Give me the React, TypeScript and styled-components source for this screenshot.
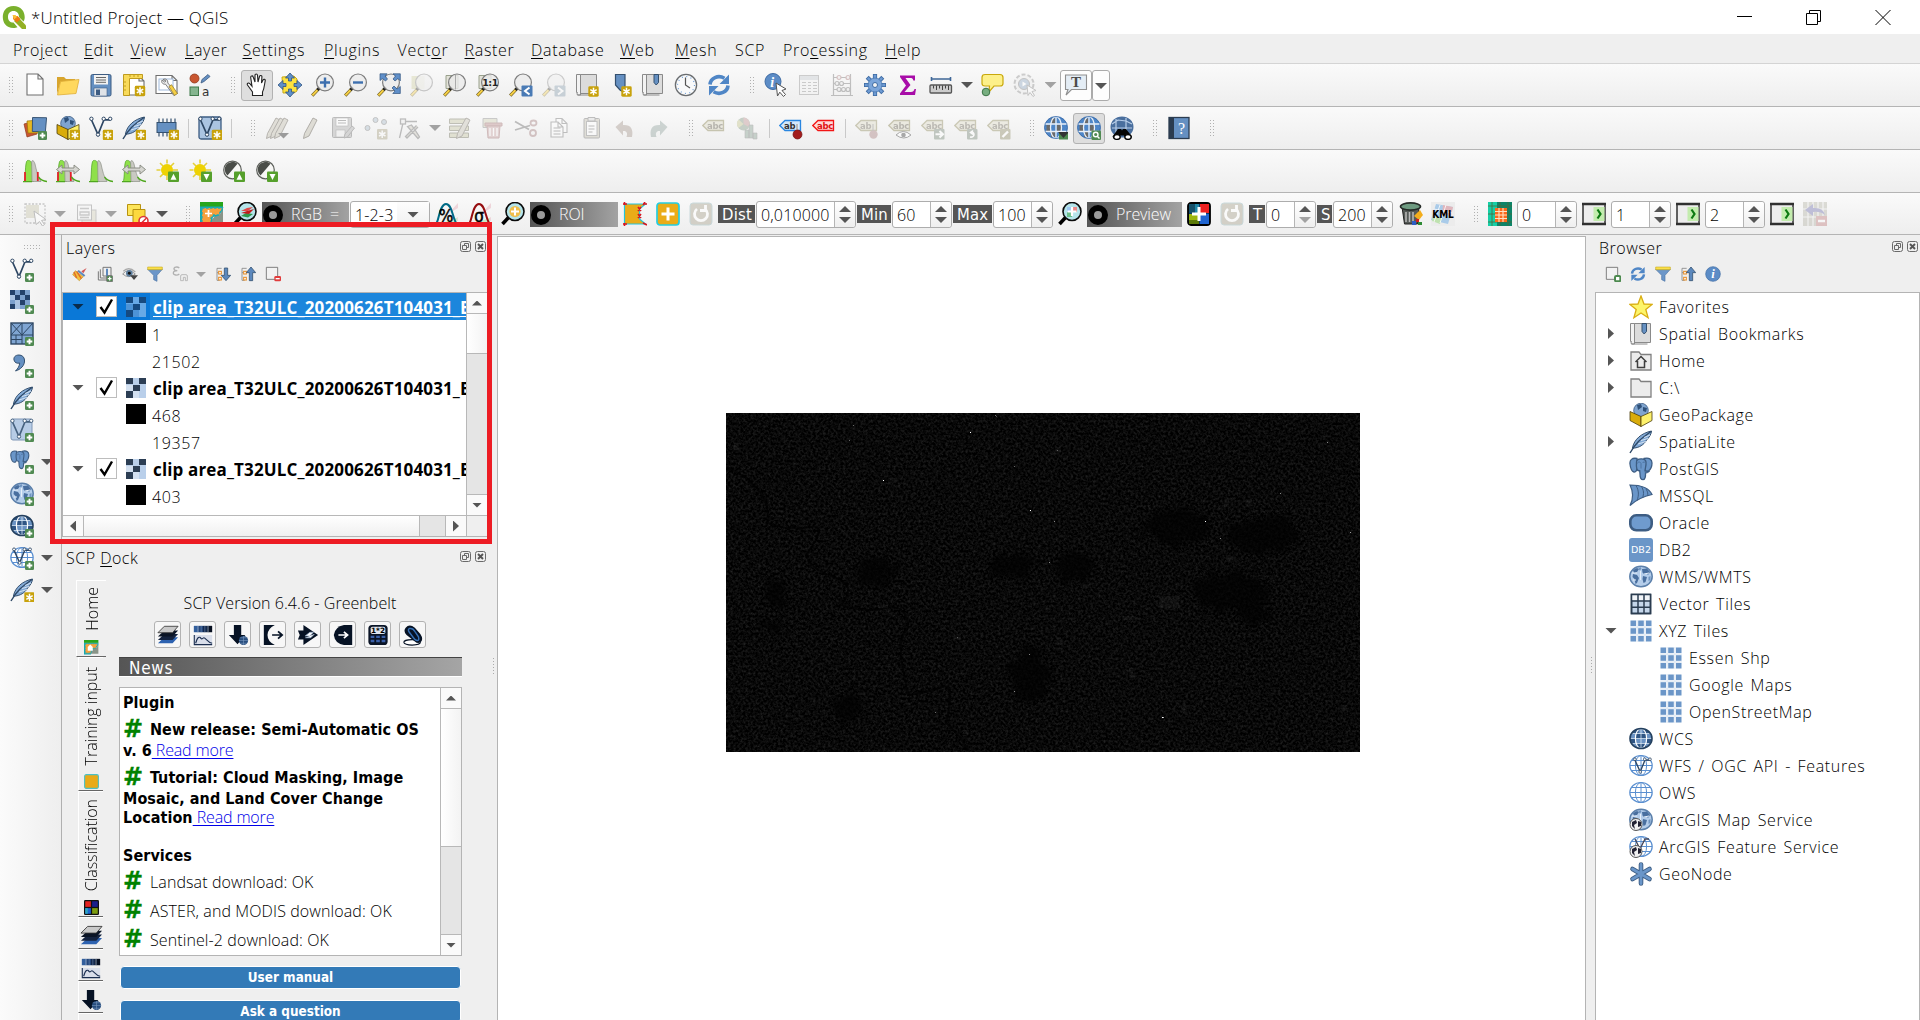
import React from 'react';
import styled, { createGlobalStyle, css } from 'styled-components';

const UI = `"Open Sans", "Noto Sans", sans-serif`;
const DIALOG = `"DejaVu Sans Condensed", "DejaVu Sans", sans-serif`;

const Global = createGlobalStyle`
  *, *::before { box-sizing: border-box; }
  body { margin: 0; overflow: hidden; background: #efefef; font: 300 16px ${UI}; letter-spacing: .5px; color: #000; }
  svg { display: block; flex: none; font-weight: 400; letter-spacing: 0; }
`;

/* ---------- icon parts ---------- */

const Star = ({ x = 13, y = 13 }: { x?: number; y?: number }) => (
  <g transform={`translate(${x} ${y})`}>
    <rect x="0.3" y="0.3" width="10.4" height="10.4" rx="1.4" fill="#c8a20c" />
    <path d="M5.5 1.8v7.4M2.3 3.7l6.4 3.6M8.7 3.7L2.3 7.3" stroke="#fff" strokeWidth="1.5" />
  </g>
);
const Plus = ({ x = 15, y = 15 }: { x?: number; y?: number }) => (
  <g transform={`translate(${x} ${y})`}>
    <rect x="0" y="0" width="9" height="9" rx="1.3" fill="#508a52" />
    <path d="M4.5 1.7v5.6M1.7 4.5h5.6" stroke="#fff" strokeWidth="1.9" />
  </g>
);
const Lens = ({ children }: { children?: React.ReactNode }) => (
  <g>
    <path d="M8 15.5L1.2 22.6" stroke="#6b5a20" strokeWidth="3.2" />
    <path d="M7 16.5L1.4 22.4" stroke="#f5cf45" strokeWidth="2" />
    <path d="M8.8 14.4L6.4 17" stroke="#222" strokeWidth="2.8" />
    <circle cx="14" cy="9.4" r="8.4" fill="#ebebeb" fillOpacity=".8" stroke="#7d7d7d" strokeWidth="1.2" />
    {children}
  </g>
);
const Globe = ({ fill = '#fff', line = '#5a8fd0' }: { fill?: string; line?: string }) => (
  <g fill="none" stroke={line} strokeWidth="1">
    <ellipse cx="12" cy="11.5" rx="11.2" ry="10" fill={fill} strokeWidth="1.2" />
    <ellipse cx="12" cy="11.5" rx="5.6" ry="10" />
    <path d="M12 1.5v20M1 11.5h22M2.6 6.5h18.8M2.6 16.5h18.8" />
  </g>
);
const DarkGlobe = () => (
  <g>
    <ellipse cx="12" cy="11.500" rx="11" ry="10" fill="#6b93c4" />
    <path d="M2.500 6.500l4-4h3v4zM14.500 2.500h3l4 4h-7zM1 11.500h5v5H3zM18 11.500h5l-2 5h-3zM7 7h10v4.500H7zM7 16.500h10V20H8z" fill="#2f5584" />
    <path d="M12 1.500v20M1 11.500h22M2.600 6.500h18.800M2.600 16.500h18.800" stroke="#d7e4f3" strokeWidth=".8" />
    <ellipse cx="12" cy="11.500" rx="5.600" ry="10" fill="none" stroke="#fff" strokeWidth="1.200" />
    <ellipse cx="12" cy="11.500" rx="11" ry="10" fill="none" stroke="#24405f" strokeWidth="1.600" />
  </g>
);
const Earth = () => (
  <g>
    <ellipse cx="12" cy="11.5" rx="11.2" ry="10.2" fill="#b4cdea" stroke="#5c80ab" strokeWidth="1.500" />
    <path d="M4 5l4-2 2 1-2 3-3 1zM4 9l4 1 2 3-2 5-1.500 1-1-5-2-2zM13 4l5-.5 3 3.500-2 3-1.500-2-2 1.500-2-2zM14 11l4 1-1.500 5-2 1-1-4z" fill="#496f9f" />
    <path d="M9.500 3.500l2-1.500 1 2-2 1.500zM19.500 12l2-1v4l-2 1z" fill="#6f94c0" />
    <path d="M4 15h3M15 9l5-1M11.500 6v9M3 8h5" stroke="#e6eff9" strokeWidth="1" />
  </g>
);
const Nodes = ({ color = '#2d4663' }: { color?: string }) => (
  <g fill="none" stroke={color}>
    <path d="M2.5 4L9 18.5L15 3.8h6" strokeWidth="1.7" />
    <g fill="#fff" strokeWidth="1"><circle cx="2.4" cy="2.8" r="1.7" /><circle cx="14.7" cy="2.8" r="1.7" /><circle cx="21.2" cy="2.8" r="1.7" /><circle cx="9" cy="18.6" r="1.7" /></g>
  </g>
);
const Feather = () => (
  <g>
    <path d="M22.5 1C13 3 5 9 3.4 18.2c7-.2 11.6-3.6 14.2-8.2 2.800-3 4.600-5.600 4.900-9z" fill="#83aad6" stroke="#34506f" strokeWidth="1" />
    <path d="M22 1.5C14 7.500 7.500 11 1 23" fill="none" stroke="#2e4866" strokeWidth="1.4" />
    <path d="M9 14l8-2.500M12 10.500l7-2M15 7.500l6-2.500" stroke="#dbe8f5" strokeWidth=".9" />
  </g>
);
const Elephant = () => (
  <g fill="#6a96c9" stroke="#3d5d83" strokeWidth="1.300">
    <path d="M8 1.500C3 .5.5 3 1 7c.4 4 2 7.500 4 8 2 .3 3-2 3-4z" />
    <path d="M15 1.500c5-1.300 8 .7 8 4.500 0 3-1.500 6.500-3.500 8-2 1.200-4-.5-4-3z" />
    <path d="M7.500 5c0-4 9-4.500 9.500 0 .4 4-1 6-1 9l4 .5c-1 1.500-2.500 1.500-3.500 1.500.2 3-.3 6.700-2.500 6.700s-3-2.200-3-6l-.3-3c-3 .6-3.600-3-3.200-8.700z" />
    <path d="M8.500 6.500c0-2 3-2 3.500 0v5M16.500 6c-1-1.500-2.500-1-3 0" fill="none" stroke="#4a6f9e" strokeWidth=".9" />
  </g>
);
const Grid = () => (
  <g fill="#6b96c8">
    {[1.5, 9.2, 16.9].map((x) => [1.5, 9.2, 16.9].map((y) => <rect key={`${x}-${y}`} x={x} y={y} width="5.600" height="5.600" />))}
    <path d="M8.200 1v22M15.900 1v22M1 8.200h22M1 15.900h22" stroke="#dbe6f2" strokeWidth="1" />
  </g>
);
const GeoBox = () => (
  <g stroke="#4b3e0a" strokeWidth=".8">
    <circle cx="12" cy="7.500" r="7.300" fill="#7fa4cf" stroke="#3d5d83" />
    <path d="M8 2l4-1 1 3-4 3zM14 4l4 1-1 4-3-1z" fill="#2f5179" stroke="none" />
    <path d="M1 8.500l11 5v10l-11-6z" fill="#d9ac0b" />
    <path d="M23 8.500l-11 5v10l11-6z" fill="#fdf16b" />
  </g>
);
const Refresh = () => (
  <g fill="none" stroke="#4f86c6" strokeWidth="3.600">
    <path d="M3 11.500C3.500 5 11 1.500 17.500 5.200" />
    <path d="M21 12.500C20.500 19 13 22.500 6.500 18.800" />
    <path d="M22 1.500v9.500h-9.500zM2 22.500V13h9.500z" fill="#4f86c6" stroke="none" />
  </g>
);
const Tag = ({ c = '#a9a583', bg = '#e4e2d2', t = '#8f8b80', word = 'abc' }: { c?: string; bg?: string; t?: string; word?: string }) => (
  <g>
    <path d="M.8 9.500L6 4.500h15.500v10H6z" fill={bg} stroke={c} strokeWidth="1.300" />
    <text x="5" y="12.600" fontSize="8.500" fontWeight="700" fill={t} letterSpacing="-.3" fontFamily="DejaVu Sans, sans-serif">{word}</text>
  </g>
);
const Hist = ({ red, arrow }: { red?: boolean; arrow?: boolean }) => (
  <g>
    <path d="M1 22.500C3 22 1.500 2 4.500 1.500S8.500 3 9.500 7l1 15.500z" fill="#8fe04a" stroke="#4ca022" strokeWidth=".7" />
    <path d="M9 22.500L8.600 3c.4-2.500 2.500-1.500 3.400 2 1.500 6.500 3 13.500 6 17.500z" fill="#c9c9c2" stroke="#8d9187" strokeWidth=".7" />
    {red && <path d="M2 13v9M14.800 13v9" stroke="#e3222a" strokeWidth="1.800" />}
    <path d="M0 22.600h9M15.500 18q3 4 8.500 4.500" fill="none" stroke="#4fa71e" strokeWidth="1.300" />
    {arrow && <path d="M.5 10.500L6 6v3h12V6l5.500 4.500L18 15v-3H6v3z" fill="#d5d5d0" stroke="#83877d" strokeWidth=".9" />}
  </g>
);
const UpDown = ({ down }: { down?: boolean }) => (
  <g>
    <rect x="13" y="12.500" width="11" height="10.500" rx="1" fill="#56a02c" />
    <path d={down ? 'M15.500 15h6l-3 6z' : 'M15.500 20.800h6l-3-6z'} fill="#fff" />
  </g>
);
const Sun = () => (
  <g>
    <path d="M12 .5v4M12 17v4M1.500 11h4M18 11h5M5 4l3 3M16 7l3-3M5 18l3-3" stroke="#e3cf3a" strokeWidth="1.600" />
    <circle cx="12" cy="11" r="6" fill="#eed202" />
  </g>
);
const Contrast = () => (
  <g>
    <circle cx="11.500" cy="11" r="8.800" fill="#f7f7f5" stroke="#5c5f5a" strokeWidth="1.200" />
    <path d="M16.500 4.700A7.500 7.500 0 0 0 6.500 16.500z" fill="#4a4d48" />
  </g>
);
const Page = ({ x = 4, y = 1, w = 16, h = 21 }: { x?: number; y?: number; w?: number; h?: number }) => (
  <path d={`M${x} ${y}h${w - 5}l5 5v${h - 5}h-${w}z M${x + w - 5} ${y}v5h5`} fill="#fff" stroke="#6f6f6f" strokeWidth="1.100" />
);
const Scroll = () => (
  <g stroke="#8a8a8a" strokeWidth="1">
    <path d="M4.500 1.500h17v19h-17z" fill="#dcdcdc" />
    <path d="M1.500 1.500h4v20.500h-3q-1-1 0-2.500h-1z" fill="#f3f3f3" />
    <path d="M2.500 22h16" fill="none" />
  </g>
);
const Globe3D = () => (
  <g>
    <ellipse cx="12" cy="11.500" rx="11.500" ry="11" fill="#4e86c8" />
    <path d="M2.500 9h4v6h-4zM13 9h4v6h-4zM7 2.500h4v5H7zM7 16h4v5H7z" fill="#6a6a6a" />
    <path d="M1 8h22M1 15.500h22M12 .5v22" stroke="#e9f0f8" strokeWidth="1.300" />
    <ellipse cx="12" cy="11.500" rx="5.500" ry="11" fill="none" stroke="#e9f0f8" strokeWidth="1.300" />
    <ellipse cx="12" cy="11.500" rx="11.500" ry="11" fill="none" stroke="#2f62a3" strokeWidth=".8" />
  </g>
);
const Pencil = ({ dx = 0 }: { dx?: number }) => (
  <path transform={`translate(${dx} 0)`} d="M2.500 22.500l1-5L12 2l4 2L8 20z" fill="#cfccc0" stroke="#77736a" strokeWidth=".9" />
);
const BlackLens = ({ children }: { children?: React.ReactNode }) => (
  <g>
    <path d="M8 15L1.500 22" stroke="#000" strokeWidth="3.600" />
    <circle cx="14" cy="9.500" r="9" fill="#b5e4ea" stroke="#0b0b0b" strokeWidth="1.600" />
    {children}
  </g>
);
const Undo = ({ c }: { c: string }) => (
  <path d="M2.500 11l7.500-6.500v4.500c8-.5 10.500 4 9 12h-5.500c1.500-4 0-6.500-3.500-6v4.500z" fill={c} />
);
const RedoBox = () => (
  <g opacity=".55">
    <rect x="1" y="1" width="22" height="22" rx="3" fill="#b9b4a4" stroke="#a7c3c6" />
    <path d="M8 7a6.500 6.500 0 1 0 8 0M16.500 3v5.500H11" fill="none" stroke="#fff" strokeWidth="2.800" />
  </g>
);
const Layered = () => (
  <g>
    <path d="M1 21l7-6.500h15L17 21z" fill="#2d62b0" /><path d="M1 17.500L8 11h15l-6 6.500z" fill="#14233f" />
    <path d="M1 13.500L8 7h15l-6 6.500z" fill="#0b1526" /><path d="M1 9.500L8 2.500h15L17 9.500z" fill="#c9c9c9" stroke="#333" strokeWidth=".9" />
  </g>
);
const BandPlot = () => (
  <g>
    <path d="M2 2h5v7H2z" fill="#335f9c" /><path d="M7 2h5v7H7z" fill="#23467c" /><path d="M12 2h5v7h-5z" fill="#12284d" /><path d="M17 2h5v7h-5z" fill="#060f20" />
    <path d="M6 2v7M10 2v7M14 2v7M18 2v7" stroke="#8fa6c8" strokeWidth=".5" />
    <rect x="2" y="12" width="20" height="11" fill="#d9deea" />
    <path d="M2.500 12v10.500H22M4 21c2-7 4-8 6-5 1 1 2-1 3-1 2 0 4 5 9 6" fill="none" stroke="#1b2e50" strokeWidth="1.200" />
  </g>
);
const DownGlobe = () => (
  <g>
    <path d="M7.500 1h8v11H20l-8.500 10L2 12h5.500z" fill="#061224" />
    <circle cx="18" cy="18" r="5" fill="#274d7e" /><path d="M13 18h10M18 13v10M14.500 15h7M14.500 21h7" stroke="#7f9cc2" strokeWidth=".6" />
  </g>
);
const Clip = () => (
  <g>
    <path d="M10 20l5-6 5-2 3-5v15H10z" fill="#8a9488" />
    <path d="M0 4h23v4l-5 6-5 1-2 8H0z" fill="#14aab4" />
    <rect width="23" height="4.500" fill="#27a51b" />
    <path d="M2 6h20.500l-4 7h-5l-2.500 3v5H2z" fill="#f6a03c" stroke="#25aab2" strokeWidth="1.300" strokeDasharray="2.500 1.500" />
  </g>
);
const Stat = ({ c, s }: { c: string; s: string }) => (
  <g>
    <path d="M13 12L23 1v5zM14 20l9-5v4z" fill="#eed5da" /><path d="M3 22h19v-6z" fill="#c7efc8" />
    <path d="M1 22C4 19 4.500 2 11 2S18 19 22 22" fill="none" stroke={c} strokeWidth="2" />
    <text x="11" y="19.500" fontSize="17" textAnchor="middle" fontFamily="DejaVu Sans Condensed, sans-serif" stroke="#000" strokeWidth=".5">{s}</text>
  </g>
);
const Window = () => (
  <g>
    <rect x="1" y="2" width="22" height="20" fill="#ededed" stroke="#303030" strokeWidth="1.500" />
    <path d="M0 2h24M0 22h24" stroke="#303030" strokeWidth="2.600" />
    <rect x="11.500" y="5" width="11" height="14" fill="#c3ecae" /><path d="M15.500 7.500l3 4.500-3 4.500" fill="none" stroke="#0d7a12" strokeWidth="2.200" />
  </g>
);
const Checker = ({ pale, mid, dark }: { pale: string; mid: string; dark: string }) => (
  <g>
    <rect width="20" height="20" fill={pale} />
    <path d="M0 0h7v6H0zM13 0h7v6h-7zM7 7h7v6H7zM0 13h7v7H0z" fill={dark} />
    <path d="M0 7h7v6H0zM7 13h6v7H7z" fill={mid} />
  </g>
);
const Tray = ({ down }: { down?: boolean }) => (
  <g>
    <path d="M3 3.500h7M3 3.500v18h4M3 10h4" stroke="#8a8a8a" strokeWidth="1.300" fill="none" />
    <g fill="#fff" stroke="#e8902a" strokeWidth="1.600"><rect x="5.500" y="8" width="4" height="4" /><rect x="5.500" y="17" width="4" height="4" /></g>
    <path d={down ? 'M14 3h5v11h4.500L16.500 22 9.500 14H14z' : 'M14 22h5V10h4.500L16.500 1.500 9.500 10H14z'} fill="#5c88bd" stroke="#34506f" strokeWidth="1.200" />
  </g>
);
const Twin = ({ side }: { side: 'in' | 'mid' | 'out' }) =>
  side === 'in' ? (
    <g><path d="M2 1h12Q6 5 6 12t8 11H2z" fill="#061224" /><path d="M11 12h11M17.500 8l4.500 4-4.500 4" fill="none" stroke="#061224" strokeWidth="1.900" /></g>
  ) : side === 'mid' ? (
    <g><path d="M1 7h6V1l16 11L7 23v-6H1l2-5z" fill="#061224" /><path d="M9 13l5-4h4l-4 4zM9 15l6 0 4-4" fill="#fff" stroke="#9bb3d0" strokeWidth=".8" /></g>
  ) : (
    <g><path d="M22 1v22h-9Q3 21 2 12 3 3 13 1z" fill="#061224" /><path d="M7 12h10M13 8.500l4 3.500-4 3.500" fill="none" stroke="#fff" strokeWidth="1.900" /></g>
  );

const ICONS: Record<string, React.ReactNode> = {
  logo: (
    <g>
      <path d="M11.500 1C4 1 .8 6.500.8 12S4 23 11.500 23c1.500 0 3-.3 4-.8l-4-4.700c-3.600 0-5.500-2-5.500-5.500s2-6 5.500-6 5.500 2.500 5.500 6l4.500 4.500c1-1.500 1.200-3 1.200-4.500C22.700 6.500 19 1 11.500 1z" fill="#7ab02c" />
      <path d="M12.500 12.500h4l7.500 8v3.500h-4l-7.500-7.500z" fill="#93b023" /><path d="M11 11h4.500l3 3-3.500 3.500L11 14z" fill="#ee7913" /><path d="M10.500 10h3l1.500 2-3 2.500z" fill="#f8c13c" />
    </g>
  ),
  fresh: <Page />,
  open: <g><path d="M1 4h7l2 2h9v5H4L1 21z" fill="#d8a52e" /><path d="M4.500 8.500L23 6.500 20 20.500 1.500 22z" fill="#ffd85e" stroke="#dfaf37" strokeWidth=".8" /></g>,
  save: <g><rect x="2" y="1.500" width="20" height="21.500" rx="1.500" fill="#6590c2" stroke="#3d5c82" /><rect x="5" y="2" width="14" height="9.500" fill="#f2f2f2" /><path d="M7 4.500h10M7 7h10M7 9.300h10" stroke="#666" /><rect x="5" y="15" width="13" height="8" fill="#dfe3e8" stroke="#3d5c82" strokeWidth=".6" /><rect x="7" y="16.500" width="4" height="5.500" fill="#3d5c82" /></g>,
  layout: <g><Page x={5} y={3} w={17} h={19} /><path d="M1.500 1.500h19v4h-13v17h-6z" fill="#f8da5a" stroke="#b8920f" strokeWidth=".9" /><path d="M8 2v2M12 2v2M16 2v2M2 9h2M2 13h2M2 17h2" stroke="#b8920f" strokeWidth=".8" /><Star x={12.500} y={12.500} /></g>,
  manager: <g><Page x={1} y={2.500} w={21} h={18} /><rect x="4" y="6" width="14" height="11" fill="#fff" stroke="#9fb9dc" /><path d="M8 6.500c3-1.500 5 .5 4.800 3.500l9 10.500-3 2-8.300-11.300c-3 .3-4.500-2-3.500-4.200l2.500 2 1.500-1z" fill="#ececec" stroke="#707070" strokeWidth=".9" /><path d="M14 13.500l2.500-1.800 6 8.800-3 2z" fill="#f5cf45" stroke="#8d7320" strokeWidth=".7" /></g>,
  style: <g><circle cx="6.500" cy="5.500" r="4.500" fill="#c95630" stroke="#8f3a1d" strokeWidth=".8" /><path d="M13 10l1-3.500 6-5 2 2-6 5z" fill="#6590c2" stroke="#3d5c82" strokeWidth=".8" /><rect x="2" y="14" width="8.500" height="8.500" fill="#85b58f" stroke="#3f7a4b" /><text x="14" y="22.500" fontSize="12" fill="#333" fontFamily="DejaVu Sans">a</text></g>,
  pan: <path d="M7.500 22.500v-3.500L2.500 12c-.8-1.500 1-2.700 2.300-1.300l2.200 2.500L5.700 4.500c-.2-1.800 2-2.200 2.500-.5L10 9V2.300c0-1.700 2.400-1.700 2.500 0L13 9l1.500-5.500c.5-1.600 2.600-1.200 2.400.4L16.500 10l1.500-3c.8-1.300 2.500-.6 2.200.8-.8 3.500-.8 8-2.700 11.200v3.500z" fill="#fff" stroke="#222" strokeWidth="1.100" />,
  panSel: <g><path d="M4 4l12-1 3 3v12l-3 2H5z" fill="#fde23e" stroke="#c2a20e" strokeWidth=".9" /><g fill="#5f8fc9" stroke="#30537e" strokeWidth=".8"><path d="M12 0l4.500 5h-3v3h-3V5h-3zM12 24l4.500-5h-3v-3h-3v3h-3zM0 12l5-4.500v3h3v3H5v3zM24 12l-5-4.500v3h-3v3h3v3z" /></g></g>,
  zoomIn: <Lens><path d="M14 4.500v10M9 9.500h10" stroke="#3d6fae" strokeWidth="2.400" /></Lens>,
  zoomOut: <Lens><path d="M9 9.500h10" stroke="#3d6fae" strokeWidth="2.400" /></Lens>,
  zoomFull: <g><Lens /><g fill="#5f8fc9" stroke="#30537e" strokeWidth=".7"><path d="M3 .8h7L8 3l2.500 3L8.500 8 5.500 5.500 3 7.500zM23.300.8v7L21 5.500 18 8l-2-2 2.500-3-2.500-2.200zM23.300 20.500h-7.500L18 18l-3-3 2-2 3 3 3.300-2.500z" /></g></g>,
  zoomSel: <g opacity=".38"><path d="M1.500 3h13v13h-13z" fill="#cfcf9f" /><Lens /></g>,
  zoomLayer: <g><path d="M3 2.500h12v13H3z" fill="#e2e2d8" stroke="#99a08c" /><Lens><path d="M12.500 2v14.500" stroke="#aaa" /></Lens></g>,
  zoomNative: <g><path d="M3 2.500h12v13H3z" fill="#e2e2d8" stroke="#99a08c" /><Lens><text x="14" y="13" fontSize="9.500" fontWeight="700" textAnchor="middle" fill="#222" letterSpacing="-.5" fontFamily="DejaVu Sans">1:1</text></Lens></g>,
  zoomLast: <g><Lens /><rect x="12.500" y="12.500" width="11" height="11" rx="1" fill="#4a7bb5" /><path d="M20.500 14.500L16 18l4.500 3.500" stroke="#fff" strokeWidth="2" fill="none" /></g>,
  zoomNext: <g opacity=".35"><Lens /><rect x="12.500" y="12.500" width="11" height="11" rx="1" fill="#7a93a5" /><path d="M16 14.500l4.500 3.500-4.500 3.500" stroke="#fff" strokeWidth="2" fill="none" /></g>,
  newView: <g><Scroll /><Star /></g>,
  newMark: <g><path d="M7.500 1.500H17V20l-5-3-4.500-5z" fill="#6590c2" stroke="#34506f" strokeWidth="1.200" /><Star x={13} y={13} /></g>,
  marks: <g><Scroll /><path d="M13 1.500h4.500v8L15.200 12 13 9.500z" fill="#6590c2" stroke="#34506f" /></g>,
  clock: <g><circle cx="12" cy="12" r="10.600" fill="#f8f9fa" stroke="#6a6d70" strokeWidth="1.300" /><circle cx="12" cy="12" r="8.500" fill="none" stroke="#6f9fd6" strokeWidth="1.200" strokeDasharray="1 3.450" /><path d="M11.500 4.500V12l4.500 3" fill="none" stroke="#555" strokeWidth="1.200" /></g>,
  refresh: <Refresh />,
  identify: <g><circle cx="9" cy="8.500" r="8" fill="#5c8cc6" stroke="#3e6ba3" /><text x="6.300" y="13.500" fontSize="14" fontStyle="italic" fontWeight="700" fill="#fff" fontFamily="Liberation Serif">i</text><path d="M12 10l10 6-4 1.500 3.500 4-2 2-3.700-4.300L13.500 23z" fill="#fff" stroke="#555" strokeWidth="1" /></g>,
  table: <g opacity=".45"><rect x="2.500" y="2.500" width="19" height="19" fill="#f3f3f3" stroke="#999" /><rect x="3" y="3" width="18" height="4" fill="#ccd0d4" /><path d="M5 9.500h4M11 9.500h3M16 9.500h4M5 12.500h4M11 12.500h3M16 12.500h4M5 15.500h4M11 15.500h3M16 15.500h4M5 18.500h4M11 18.500h3M16 18.500h4" stroke="#999" strokeWidth="1.200" /></g>,
  abacus: <g opacity=".5" fill="none" stroke="#8a8a8a" strokeWidth="1.200"><path d="M3.500 1v21M20.500 1v21M1 22.500h22M3 4.500h18M3 10.500h18M3 16.500h18" /><g fill="#eee"><circle cx="9" cy="4.500" r="2" stroke="#b68f8f" /><circle cx="18" cy="4.500" r="2" stroke="#b68f8f" /><circle cx="7" cy="10.500" r="2" /><circle cx="11.500" cy="10.500" r="2" /><circle cx="9" cy="16.500" r="2" /><circle cx="13.500" cy="16.500" r="2" /><circle cx="18" cy="16.500" r="2" /></g></g>,
  gear: <g><path d="M12 1v22M1 12h22M4.200 4.200l15.600 15.600M19.800 4.200L4.200 19.800" stroke="#3e6ba3" strokeWidth="4.200" /><path d="M12 1.800v20.400M1.800 12h20.400M4.800 4.800l14.400 14.400M19.200 4.800L4.800 19.200" stroke="#6d9ad2" strokeWidth="2.600" /><circle cx="12" cy="12" r="7" fill="#7ba5da" stroke="#4a78b0" strokeWidth=".8" /><circle cx="12" cy="12" r="2.500" fill="#f4f4f4" stroke="#3e6ba3" /></g>,
  sigma: <path d="M4 2.500h15v5h-1.700c-.3-2-1.200-2.500-3.300-2.500H9.500L14.500 12l-6 7h6.500c2 0 3-1.200 3.500-3h1.500L19 22H4v-1.500l6-8L4 4z" fill="#a80da8" />,
  measure: <g><path d="M2.500 6h19M2.500 4v4M21.500 4v4" stroke="#3f6797" strokeWidth="1.600" /><rect x="1" y="12" width="21.500" height="8" rx="1" fill="#ccc" stroke="#555" strokeWidth="1.300" /><path d="M4.500 12.500v3M7.500 12.500v4.500M10.500 12.500v3M13.500 12.500v4.500M16.500 12.500v3M19.500 12.500v4.500" stroke="#444" /></g>,
  tip: <g><path d="M5 1.500h15q3 0 3 3v6q0 2.500-3 2.500h-6l-5 6 .5-6H5q-3 0-3-2.500v-6q0-3 3-3z" fill="#fdf08a" stroke="#c9a80c" strokeWidth="1.200" /><circle cx="6" cy="19" r="3.800" fill="#77ae80" stroke="#3c7447" /></g>,
  action: <g opacity=".45"><circle cx="11" cy="11" r="9.500" fill="#eee" stroke="#999" strokeWidth="2" strokeDasharray="4 2" /><circle cx="11" cy="11" r="5.500" fill="#9ab0c8" stroke="#888" /><path d="M9.500 8.500l4 2.500-4 2.500z" fill="#fff" /><path d="M14 12l9 5.500-4 1 2.500 4-1.500 1-3-4-2 3z" fill="#fff" stroke="#888" /></g>,
  textNote: <g><path d="M1.500 2h21v14.500h-15L2 22l2-5.500H1.500z" fill="#e4edf5" stroke="#909090" strokeWidth="1.100" /><text x="12" y="14.200" fontSize="15" fontWeight="700" textAnchor="middle" fill="#4a4a4a" fontFamily="Liberation Serif">T</text></g>,
  addLayer: <g><path d="M1 8l10-3 3 13-10 3z" fill="#c95630" stroke="#8f3a1d" strokeWidth=".7" /><path d="M4 5l12-1v13H5z" fill="#e8b820" stroke="#97760d" strokeWidth=".7" /><path d="M9 2l14-1v14l-13 1z" transform="rotate(5 15 8)" fill="#6590c2" stroke="#34506f" strokeWidth=".9" /><Plus x={15} y={15} /></g>,
  newGpkg: <g><GeoBox /><Star x={13.500} y={13.500} /></g>,
  newShp: <g><Nodes /><Star x={13.500} y={13.500} /></g>,
  newSpl: <g><Feather /><Star x={13.500} y={13.500} /></g>,
  newMem: <g><path d="M4 2.500v18M8 2.500v18M12 2.500v18M16 2.500v18M20 2.500v18" stroke="#34506f" strokeWidth="1.200" /><rect x="2" y="6.500" width="19" height="10" fill="#6590c2" stroke="#34506f" /><Star x={13.500} y={13.500} /></g>,
  newVirt: <g><rect x="1" y="1" width="22" height="22" rx="2" fill="#aac4e2" stroke="#3d5c82" strokeWidth="1.300" /><Nodes /><Star x={13.500} y={13.500} /></g>,
  pencils: <g opacity=".55"><Pencil dx={-1} /><Pencil dx={3} /><Pencil dx={7} /><path d="M13 17h11l-5.500 5.500z" fill="#555" /></g>,
  pencil: <g opacity=".6"><Pencil dx={3} /></g>,
  saveEdit: <g opacity=".4" fill="#aaa" stroke="#666"><rect x="1.500" y="1.500" width="19" height="20" rx="1" /><rect x="5" y="2" width="12" height="8" fill="#fff" strokeWidth=".6" /><path d="M7 4.500h8M7 7h8" /><rect x="5" y="14" width="9" height="7" fill="#eee" strokeWidth=".6" /><path d="M13 22l1-4 7-8 2.500 2-7 9z" /></g>,
  addPoint: <g opacity=".4"><g fill="#a9bccb" stroke="#777"><circle cx="3.500" cy="12" r="2.500" /><circle cx="11.500" cy="4" r="2.500" /><circle cx="20" cy="6" r="2.500" /></g><rect x="13" y="13" width="10.500" height="10.500" rx="1" fill="#a79f80" /><path d="M18.200 14.500v7.500M15 16.500l6.500 3.500M21.500 16.500L15 20" stroke="#fff" strokeWidth="1.500" /></g>,
  vertex: <g opacity=".45" fill="none" stroke="#777" strokeWidth="1.300"><path d="M6 7L2.500 22M8 5.500h12" /><rect x="3.500" y="3" width="5" height="5" fill="#eee" /><path d="M19.500 9.500L8.500 20.500l1.500 1.500L21 11M10.500 10.500l4-1.500 3 4 5 8-1.500 1.500-7-8z" fill="#cfccc0" /></g>,
  modify: <g opacity=".5"><path d="M1.500 3h19v4.500h-19zM1.500 10h19v4.500h-19zM1.500 17h19v4.500h-19z" fill="#cfcfb2" stroke="#8a8a78" /><Pencil dx={6} /></g>,
  remove: <g opacity=".4"><path d="M2 2.500h14v9H2z" fill="#cfcfb2" stroke="#888" /><path d="M4 7h17v3H4z" fill="#b88" stroke="#966" /><path d="M6 10h13l-1 12H7z" fill="#c9a3a3" stroke="#966" /><path d="M9 12v8M12.500 12v8M16 12v8" stroke="#fff" strokeWidth="1.300" /></g>,
  cut: <g opacity=".45" fill="none" stroke="#777" strokeWidth="1.800"><path d="M1 5.500l14 8M1 14l15-4.500" /><ellipse cx="19.500" cy="7" rx="3" ry="2.500" stroke="#a88" /><ellipse cx="19" cy="17" rx="3" ry="3" stroke="#a88" /></g>,
  copy: <g opacity=".4"><Page x={9} y={2.500} w={11} h={14} /><Page x={4} y={6} w={12} h={15} /><path d="M6.500 12h7M6.500 15h7M6.500 18h7" stroke="#666" /></g>,
  paste: <g opacity=".45"><rect x="4" y="2.500" width="15.500" height="19.500" rx="1" fill="#c9c5b6" stroke="#777" /><rect x="6.500" y="5.500" width="10.500" height="14" fill="#fff" stroke="#888" /><path d="M8 1.500h7v3.500H8z" fill="#ddd" stroke="#777" /><path d="M8.500 10h6M8.500 13h6M8.500 16h4" stroke="#777" /></g>,
  undo: <g opacity=".4"><Undo c="#a3938a" /></g>,
  redo: <g opacity=".4" transform="translate(24 0) scale(-1 1)"><Undo c="#8f9f9a" /></g>,
  tagOff: <g opacity=".6"><Tag /></g>,
  diagram: <g opacity=".5"><circle cx="8.500" cy="8" r="6.500" fill="#9a9" /><path d="M8.500 8V1.500A6.500 6.500 0 0 1 14 11z" fill="#c9a3a3" /><path d="M8.500 8l-5 4a6.500 6.500 0 0 1 0-8.500z" fill="#cfcf9f" /><path d="M10 14h4v8h-4zM14 9h4v13h-4zM18 17h4v6h-4z" fill="#9bb0a3" stroke="#888" strokeWidth=".6" /></g>,
  tagPin: <g><Tag c="#2a86e0" bg="#d3e7fb" t="#333" word="ab" /><path d="M18 8v7" stroke="#fff" strokeWidth="2.500" /><path d="M18 8v7" stroke="#777" strokeWidth="1" /><circle cx="18.500" cy="18.500" r="4.500" fill="#a31d1d" stroke="#701010" strokeWidth=".7" /></g>,
  tagRed: <Tag c="#f21616" bg="#ffd9d9" t="#e01212" />,
  tagPinOff: <g opacity=".55"><Tag word="ab" /><circle cx="18.500" cy="18.500" r="4.200" fill="#bb9c9c" /><path d="M18 8v7" stroke="#999" /></g>,
  tagEye: <g opacity=".6"><Tag /><path d="M8 19q7-7 15 0-7 6-15 0z" fill="#fff" stroke="#777" /><circle cx="15.500" cy="19" r="2.300" fill="#777" /></g>,
  tagMove: <g opacity=".55"><Tag /><rect x="13" y="13" width="10.500" height="10.500" rx="1" fill="#98a398" /><path d="M14.500 18.200h7M18.500 15l3.500 3.200-3.500 3.300" stroke="#fff" strokeWidth="2" fill="none" /></g>,
  tagTurn: <g opacity=".55"><Tag /><rect x="13" y="13" width="10.500" height="10.500" rx="1" fill="#98a398" /><path d="M16 21c5 1 5-5 1.500-5M19 14.500L16.500 16.500l2.500 2" stroke="#fff" strokeWidth="1.600" fill="none" /></g>,
  tagEdit: <g opacity=".55"><Tag /><rect x="13" y="13" width="10.500" height="10.500" rx="1" fill="#aaa78c" /><path d="M15.500 21l5.500-5.500" stroke="#fff" strokeWidth="2.400" /></g>,
  webDown: <g><Globe3D /><rect x="15" y="16" width="9.500" height="7.500" fill="#4d8a4f" /><path d="M14 16h11l-5.500 6z" fill="#333" /></g>,
  webFind: <g><Globe3D /><rect x="14.500" y="14.500" width="9.500" height="9.500" rx="1" fill="#508a52" /><circle cx="18.700" cy="18.500" r="2.300" fill="none" stroke="#fff" strokeWidth="1.400" /><path d="M20.500 20.500l2 2" stroke="#fff" strokeWidth="1.500" /></g>,
  webBino: <g><ellipse cx="12" cy="11" rx="11.500" ry="10.500" fill="#4a6f9e" /><path d="M2 8l6-4 8 1 6 3M2 12h20M6 3v14M16 2v14" stroke="#b7cde8" strokeWidth="1.200" fill="none" /><path d="M8 13h3l1 1.500 1-1.500h3l6 7.500-1 2h-5l-2-3h-4l-2 3H3.500l-1-2z" fill="#050505" /><ellipse cx="7" cy="21" rx="3.200" ry="2.400" fill="#fff" stroke="#000" strokeWidth="1.300" /><ellipse cx="18" cy="21" rx="3.200" ry="2.400" fill="#fff" stroke="#000" strokeWidth="1.300" /></g>,
  book: <g><rect x="2" y="1.500" width="20" height="21" fill="#6590c2" stroke="#2b3c50" strokeWidth="1.300" /><rect x="2" y="1.500" width="5" height="21" fill="#2b3c50" /><text x="14.500" y="17.500" fontSize="16" fill="#fff" textAnchor="middle" fontFamily="Liberation Serif">?</text></g>,
  h1: <Hist red />, h2: <Hist red arrow />, h3: <Hist />, h4: <Hist arrow />,
  sunUp: <g><Sun /><UpDown /></g>, sunDown: <g><Sun /><UpDown down /></g>,
  conUp: <g><Contrast /><UpDown /></g>, conDown: <g><Contrast /><UpDown down /></g>,
  select: <g opacity=".5"><rect x="2" y="2" width="20" height="19" fill="none" stroke="#999" strokeDasharray="2 1.500" strokeWidth="1.300" /><path d="M3 3h13v13H3z" fill="#cfcdb8" /><path d="M11 9l12 8.500-4.500 1 3 4-2 1.500-3-4.500-3.500 3z" fill="#fff" stroke="#888" /></g>,
  form: <g opacity=".45"><rect x="8" y="8" width="14" height="14" fill="#d9d7c2" stroke="#999" /><rect x="3.500" y="3" width="14" height="15" fill="#f5f5f5" stroke="#888" /><path d="M6 6.500h9M6 10h9v3H6zM6 15.500h9" stroke="#999" strokeWidth="1.300" fill="none" /></g>,
  deselect: <g><path d="M2.500 2.500h13v11h-13z" fill="#fde55a" stroke="#b8920f" /><path d="M8 7.500h12v13H8z" fill="#fdd93e" stroke="#b8920f" /><circle cx="18.500" cy="19" r="4.500" fill="#fff" stroke="#d9363c" strokeWidth="1.600" /><path d="M15.500 22l6-6" stroke="#d9363c" strokeWidth="1.600" /></g>,
  roiClip: <g><Clip /><path d="M5 11.500h7M8.500 8v7" stroke="#fff" strokeWidth="1.700" /></g>,
  homeClip: <g><Clip /><path d="M6 17v-6l4-4 4 4v6z" fill="#fff" /></g>,
  lensLayers: <BlackLens><path d="M8 14l5-3 7 1-5 3.500z" fill="#2a9a4a" /><path d="M8 11l6-2 7-2-5 5z" fill="#c01c1c" /><path d="M8 9l6-3 6-1-5 4z" fill="#e04848" /></BlackLens>,
  percent: <Stat c="#006b86" s="%" />, sigmaStat: <Stat c="#960d10" s="σ" />,
  lensPlus: <BlackLens><circle cx="14" cy="9.500" r="5.600" fill="#f0be4c" /><path d="M14 5.500v8M10 9.500h8" stroke="#fff" strokeWidth="2" /></BlackLens>,
  lensColor: <BlackLens><path d="M9 5h5v5H9z" fill="#9cc6f2" /><path d="M14 5h5v5h-5z" fill="#e98a8a" /><path d="M9 10h5v5H9z" fill="#6cc08c" /><path d="M14 5v9M9.500 9.500h9" stroke="#fff" strokeWidth="2.200" /></BlackLens>,
  poly: <g><path d="M1.500 2h21l-6 5v10l6 5h-21z" fill="#eaac18" stroke="#22c4dc" strokeWidth="1.200" /><path d="M1.500 0v3M0 2h4M20 2h4M22 0l-2 3M1.500 21v3M0 22h4M20 21l4 2M15 5l3 4M18 5l-3 4M15 12l3 4M18 12l-3 4" stroke="#d91620" strokeWidth="1.600" /></g>,
  plusBox: <g><rect x="1" y="1" width="22" height="22" rx="3" fill="#eaac18" stroke="#25cde0" strokeWidth="1.700" /><path d="M12 5.500v13M5.500 12h13" stroke="#fff" strokeWidth="3" /></g>,
  redoBox: <RedoBox />,
  mosaic: <g><rect x="1" y="1" width="22" height="22" rx="3" fill="#103a6a" stroke="#000" strokeWidth="1.800" /><path d="M13 2h9v9h-9z" fill="#ee2020" /><path d="M2 2h6v9H2z" fill="#14506a" /><path d="M8 2h4v9H8z" fill="#2087a8" /><path d="M2 12h10v10H2z" fill="#9cb60e" /><path d="M2 18h10v4H2z" fill="#5c7a08" /><path d="M13 12h9v10h-9z" fill="#1f64d0" /><path d="M12 5v14M5 12h14" stroke="#fff" strokeWidth="3" /></g>,
  trash: <g><path d="M3 5h17l-1.500 17h-13z" fill="#555a57" stroke="#222" /><ellipse cx="11.500" cy="4.500" rx="10" ry="3.600" fill="#6d9a80" stroke="#262b28" strokeWidth="1.600" /><path d="M7 10v10M10.500 10v10M14 10v10" stroke="#bbb" strokeWidth="1.500" /><path d="M15 14l6-6 3 5-4 5z" fill="#f3ad1c" /><path d="M13 19h4v4h-4z" fill="#2c5cc4" /><path d="M17 17h3v3h-3z" fill="#d12121" /><path d="M19 20h4v3h-4z" fill="#2d8a34" /></g>,
  kml: <g><rect width="24" height="24" fill="#ececec" /><path d="M5 2l17 3-5 17L0 18z" fill="#a9cbe9" /><path d="M12 3l10 2-2 9-9-2z" fill="#eeb0b0" opacity=".8" /><path d="M2 14l9 2-2 6-8-3z" fill="#bfe2b0" /><path d="M9 3L3 20M15 3l-6 18M3 7l18 4" stroke="#fff" strokeWidth=".8" /><text x="12" y="16" fontSize="10" fontWeight="700" textAnchor="middle" fontFamily="DejaVu Sans Condensed" letterSpacing="-.1">KML</text></g>,
  matrix: <g><rect width="24" height="24" fill="#0d8468" /><path d="M0 0h9v24H0z" fill="#16cfa6" /><path d="M4 0v24M12 0v24M20 0v24M0 4h24M0 12h24M0 20h24" stroke="#4b6a3c" strokeWidth=".8" /><rect x="7" y="6" width="12" height="14" fill="#fb6a1c" /><path d="M11 6v14M15 6v14M7 9.500h12M7 13h12M7 16.500h12" stroke="#ffe2c4" strokeWidth="1.100" /></g>,
  window: <Window />,
  undoGrid: <g opacity=".35"><rect width="24" height="24" fill="#a9a898" /><path d="M5 0v24M10 0v24M15 0v24M20 0v24M0 7h24M0 15h24" stroke="#f1f1f1" strokeWidth="1.200" /><path d="M2 8l8-6v4q10-1 12 7-5-4-12-3v4z" fill="#5a5aa0" /><rect x="13" y="14" width="11" height="10" fill="#b96a6a" /><path d="M15 19h7" stroke="#fff" strokeWidth="2.500" /></g>,
  addVec: <g><Nodes /><Plus /></g>,
  addRas: <g><rect width="20" height="19" fill="#7ba0cd" /><path d="M0 0h5v5H0zM10 0h5v5h-5zM5 5h5v5H5zM15 5h5v5h-5zM0 14h5v5H0zM10 10h5v5h-5z" fill="#23426b" /><path d="M5 10h5v9H5zM0 5h5v5H0z" fill="#a9c3e2" /><Plus /></g>,
  addMesh: <g><rect x="1" y="1" width="22" height="21" fill="#7fa5d2" stroke="#2d4663" strokeWidth="1.400" /><path d="M1 13h22M12 1v21M1 1l11 12M12 1L1 13M23 1L12 13M6 13v9M1 17.500h11" stroke="#2d4663" fill="none" /><Plus /></g>,
  addCsv: <g><path d="M9 1c-4 0-5.500 2.500-5 5 .5 2.600 3 3.800 5.700 3C9.500 12 8 14.500 5.500 17c5-1.500 9.500-5.500 9-11-.2-3-2.500-5-5.500-5z" fill="#6590c2" stroke="#34506f" /><Plus /></g>,
  addSpl: <g><Feather /><Plus /></g>,
  addVirt: <g><rect x="1" y="1" width="21" height="21" rx="2" fill="#b7cce6" stroke="#7f96b5" /><Nodes color="#46617f" /><Plus /></g>,
  addPg: <g><g transform="scale(.82)"><Elephant /></g><Plus /></g>,
  addWms: <g><Earth /><Plus /></g>,
  addWcs: <g><DarkGlobe /><Plus /></g>,
  addWfs: <g><Globe /><g transform="translate(2 1) scale(.85)"><Nodes /></g><Plus /></g>,
  newFeather: <g><Feather /><Star x={14} y={14} /></g>,
  brush: <g><path d="M14 8l8-5-5 8z" fill="#d35656" /><path d="M5 7l12 9-6 6L1 13z" fill="#f3c13c" stroke="#b8871b" strokeWidth=".8" /><path d="M3 9l4 9M7 8l7 11" stroke="#df6c2a" strokeWidth="2.200" /><path d="M10 6l10 8-2 2L8 8z" fill="#5c88bd" /></g>,
  addGroup: <g fill="none" stroke="#777" strokeWidth="1.500"><path d="M2 8v13h14M5 5v13h14M9 2h12v13H9z" /><path d="M15 4v12" stroke="#5c88bd" strokeWidth="3" /><Plus x={14.500} y={14.500} /></g>,
  eye: <g><path d="M1 12Q9 2 20 12q-10 8-19 0z" fill="#eee" stroke="#888" strokeWidth="1.300" /><circle cx="11" cy="11" r="5" fill="#5e7f9f" /><circle cx="11" cy="11" r="2.200" fill="#111" /><path d="M2 8Q10 0 20 9" fill="none" stroke="#aaa" strokeWidth="2" /><path d="M12 14h12l-6 7z" fill="#444" /></g>,
  funnel: <g><path d="M1 5h22l-8 9v9l-5-2.500V14z" fill="#6b96c9" stroke="#4c76a8" /><path d="M1 1.500h22v4H1z" fill="#fbe04b" stroke="#c2a20e" strokeWidth=".8" /></g>,
  expr: <g opacity=".45" fill="none" stroke="#666" strokeWidth="2"><path d="M11 3C8 .5 2.500 1.500 3 4.500 3.300 6.500 5.500 7 8 7 4.500 7 2 8 2 10.500 2 14 8 14.500 11 12" /><path d="M13 22v-7q0-2 2-2h6q2 0 2 2v7h-3v-5h-3v5z" strokeWidth="1.300" /></g>,
  expand: <Tray down />, collapse: <Tray />,
  removeLayer: <g><path d="M2 2h17v18H2z" fill="#f2f2f2" stroke="#777" strokeWidth="1.400" /><rect x="14" y="15" width="10" height="8" rx="2" fill="#e03c3c" /><path d="M16 19h6" stroke="#fff" strokeWidth="2" /></g>,
  addSel: <g><path d="M2 2h17v18H2z" fill="#f2f2f2" stroke="#777" strokeWidth="1.400" /><rect x="15" y="15" width="8" height="8" rx="2" fill="#fff" stroke="#4d8a4f" strokeWidth="3" /></g>,
  info: <g><circle cx="12" cy="12" r="11" fill="#5c8cc6" stroke="#3e6ba3" /><text x="12" y="18.500" fontSize="19" fontStyle="italic" fontWeight="700" fill="#fff" textAnchor="middle" fontFamily="Liberation Serif">i</text></g>,
  fav: <path d="M12 1l3 8 8.300.3-6.500 5.200 2.300 8.200L12 18l-7.100 4.700 2.300-8.200L.7 9.300 9 9z" fill="#fdf56a" stroke="#d9ae14" strokeWidth="1.300" />,
  homeDir: <g><path d="M2 3h8l2 2.500h10V21H2z" fill="#ececec" stroke="#808080" strokeWidth="1.300" /><path d="M6.500 13L12 7.500 17.500 13M8.500 12v6.500h7V12" fill="none" stroke="#3f3f3f" strokeWidth="1.500" /></g>,
  dir: <path d="M2 3h8l2 2.500h10V21H2z" fill="#ececec" stroke="#808080" strokeWidth="1.300" />,
  gpkg: <GeoBox />, feather: <Feather />, pg: <Elephant />,
  mssql: <g><path d="M1 1c8 0 18 1 22 9.500C16 12 7 16 1 21.500 5 14 4 7 1 1z" fill="#6a96c9" stroke="#3d5d83" strokeWidth="1.200" /><path d="M7 1.500c3 5 3 10 1 15M12 2c3 4 3 8 1.500 12M17 5c2 3 2 5 1.500 7" fill="none" stroke="#3d5d83" /></g>,
  oracle: <rect x="1.300" y="4.300" width="21.400" height="15" rx="6" fill="#6f9bce" stroke="#3d5d83" strokeWidth="2.600" />,
  db2: <g><rect width="24" height="24" rx="3" fill="#6b96c8" /><text x="12" y="14.800" fontSize="9.500" fill="#fff" textAnchor="middle" fontFamily="DejaVu Sans">DB2</text></g>,
  wms: <Earth />,
  vtiles: <g><rect x="2.500" y="2.500" width="19" height="19" fill="#c5d6ea" stroke="#2b3c50" strokeWidth="1.600" /><path d="M2.500 2.500h19v6h-19z" fill="#f1f4f8" /><path d="M9 2v20M15 2v20M2 9h20M2 15.200h20M2.500 2.500h19v19h-19z" stroke="#2b3c50" strokeWidth="1.500" fill="none" /></g>,
  grid: <Grid />,
  wcs: <DarkGlobe />,
  wfs: <g><Globe /><g transform="translate(4 3) scale(.8)"><Nodes /></g></g>,
  ows: <Globe />,
  arcMap: <g><Earth /><circle cx="7" cy="16.500" r="6" fill="#f0f0f0" stroke="#555" /><path d="M3 14l4-2 1 3-3 2 1 4-3-3zM9 13l3 1 0 4-3 1z" fill="#223" /></g>,
  arcFeat: <g><Globe /><path d="M6 4l5 10 5-10h4" fill="none" stroke="#445" strokeWidth="1.300" /><circle cx="7" cy="16.500" r="6" fill="#f0f0f0" stroke="#555" /><path d="M3 14l4-2 1 3-3 2 1 4-3-3zM9 13l3 1 0 4-3 1z" fill="#223" /></g>,
  geonode: <g><g stroke="#3d5d83" strokeWidth="4.600" strokeLinecap="round"><path d="M12 2.500v19M3.500 7l17 10M20.500 7l-17 10" /></g><g stroke="#6a96c9" strokeWidth="2.800" strokeLinecap="round"><path d="M12 2.500v19M3.500 7l17 10M20.500 7l-17 10" /></g></g>,
  layers: <Layered />, bands: <BandPlot />, down: <DownGlobe />,
  twinIn: <Twin side="in" />, twinMid: <Twin side="mid" />, twinOut: <Twin side="out" />,
  calc: <g><rect x="1.500" y="1" width="21" height="22" rx="4" fill="#0a1426" /><rect x="4" y="3" width="16" height="8" rx="2" fill="#dfe5ee" /><text x="12" y="10" fontSize="8" fontWeight="700" textAnchor="middle" fontFamily="DejaVu Sans">1*2</text><path d="M4 14h4M10 14h4M16 14h4M4 18.500h4M10 18.500h4M16 18.500h4" stroke="#3a5fa8" strokeWidth="2.600" /></g>,
  batch: <g><ellipse cx="11" cy="20" rx="9" ry="3" fill="#fff" stroke="#061224" strokeWidth="1.200" /><path d="M4 4q4-5 10 0l6 7q4 6 0 9-3 2-6-1L5 12q-4-4-1-8z" fill="#061224" /><path d="M8 5q4-1 6 3l4 6q1 4-1 4-3 0-6-5L8 9q-2-3 0-4z" fill="none" stroke="#3670b5" strokeWidth="1.600" /></g>,
  classes: <g><rect width="24" height="24" rx="2" fill="#111" /><path d="M2 2h9v9H2z" fill="#e32222" /><path d="M13 2h9v9h-9z" fill="#1a1f8c" /><path d="M2 13h9v9H2z" fill="#1f64d0" /><path d="M13 13h9v9h-9z" fill="#7b9c10" /><path d="M2 13h4v9H2z" fill="#2ea6c0" /></g>,
  input: <rect x="1" y="1" width="22" height="22" rx="2.500" fill="#e9aa18" stroke="#4cc0c4" strokeWidth="1.800" />,
};

const Icon = ({ n, s = 24 }: { n: string; s?: number }) => (
  <svg width={s} height={s} viewBox="0 0 24 24">{ICONS[n]}</svg>
);

/* ---------- chrome ---------- */

const Frame = styled.div`position: relative; display: flex; flex-direction: column; width: 1920px; height: 1020px; overflow: hidden;`;
const TitleBar = styled.header`display: flex; align-items: center; height: 34px; padding: 0 29px 0 2px; background: #fff;`;
const Title = styled.span`flex: 1; margin-left: 5px; font-size: 17px; letter-spacing: .2px; line-height: 22px; padding-top: 2px;`;
const WinButtons = styled.div`display: flex; gap: 54px; align-items: center;`;

const MenuBar = styled.nav`display: flex; height: 30px; padding-left: 13px; border-bottom: 1px solid #d4d4d4; background: #efefef; letter-spacing: .7px;`;
const MenuItem = styled.span<{ $w: number }>`width: ${(p) => p.$w}px; line-height: 32px; height: 29px; white-space: nowrap; u { text-underline-offset: 2px; text-decoration-thickness: 1px; }`;

const ToolRow = styled.div<{ $h?: number }>`
  display: flex; align-items: flex-start; height: ${(p) => p.$h ?? 43}px; padding-top: 6px;
  border-bottom: 1px solid #b4b4b4; background: linear-gradient(#fafafa, #eeeeee);
`;
const Grip = styled.i<{ $l: number; $r: number }>`
  flex: none; width: 4px; height: 17px; margin: 7px ${(p) => p.$r}px 0 ${(p) => p.$l}px;
  background: radial-gradient(circle at .5px .5px, #b0b0b0 .6px, transparent .9px) 0 0 / 3px 3px;
`;
const Tool = styled.span<{ $on?: boolean }>`
  flex: none; width: 32px; height: 31px; margin-right: 1px; padding: 2px 3px;
  border: 1px solid transparent; border-radius: 3px;
  ${(p) => p.$on && css`border-color: #b2b2b2; background: #dedede;`}
`;
const Boxed = styled.span<{ $w: number }>`
  display: flex; justify-content: center; flex: none; width: ${(p) => p.$w}px; height: 31px; padding-top: 2px;
  border: 1px solid #ababab; border-radius: 3px; background: #fdfdfd; margin-left: 1px; & + & { margin-left: 0; padding-top: 12px; }
`;
const Divider = styled.i<{ $l: number; $r: number }>`flex: none; width: 1px; height: 19px; margin: 6px ${(p) => p.$r}px 0 ${(p) => p.$l}px; background: #c9c9c9;`;
const Tri = styled.i<{ $up?: boolean; $pale?: boolean; $s?: number }>`
  flex: none; display: block; width: ${(p) => (p.$s ?? 6) * 2}px; height: ${(p) => p.$s ?? 6}px;
  background: ${(p) => (p.$pale ? '#a2a2a2' : '#555')};
  clip-path: ${(p) => (p.$up ? 'polygon(50% 0, 100% 100%, 0 100%)' : 'polygon(0 0, 100% 0, 50% 100%)')};
`;
const SideTri = styled.i<{ $left?: boolean }>`
  flex: none; display: block; width: 6px; height: 11px; background: #555;
  clip-path: ${(p) => (p.$left ? 'polygon(100% 0, 100% 100%, 0 50%)' : 'polygon(0 0, 100% 50%, 0 100%)')};
`;
const Drop = styled.span<{ $w: number }>`flex: none; display: flex; justify-content: center; width: ${(p) => p.$w}px; padding-top: 12px;`;
const Bare = styled.span<{ $l?: number }>`flex: none; margin-top: 3px; margin-left: ${(p) => p.$l ?? 0}px;`;

const Gradient = styled.span<{ $w: number; $l: number }>`
  flex: none; display: flex; align-items: center; width: ${(p) => p.$w}px; height: 25px; margin: 3px 0 0 ${(p) => p.$l}px; padding-left: 1px;
  background: linear-gradient(90deg, #555, #a3a3a3); color: #fff; letter-spacing: -.1px; white-space: pre; line-height: 27px;
  &::before { content: ''; width: 20px; height: 20px; margin-right: 8px; border: 6px solid #000; border-radius: 50%; background: #999; }
`;
const Tagged = styled.span<{ $w: number; $l: number }>`
  flex: none; width: ${(p) => p.$w}px; height: 18px; margin: 6px 0 0 ${(p) => p.$l}px; padding-left: 4px;
  background: #555; color: #fff; font: 16.5px/20px ${DIALOG}; letter-spacing: .2px; white-space: nowrap;
`;
const Field = styled.span<{ $w: number; $l: number }>`
  flex: none; display: flex; width: ${(p) => p.$w}px; height: 27px; margin: 2px 0 0 ${(p) => p.$l}px;
  border: 1px solid #adadad; border-radius: 3px; background: #fff; letter-spacing: .15px; line-height: 27px; padding-left: 4px;
`;
const FieldText = styled.span`flex: 1;`;
const Stepper = styled.span`
  display: flex; flex-direction: column; align-items: center; justify-content: center; gap: 5px; width: 21px;
  border-left: 1px solid #b5b5b5; border-radius: 0 3px 3px 0; background: linear-gradient(#fff, #efefef);
`;
const Spin = ({ w, l, v, atMin }: { w: number; l: number; v: string; atMin?: boolean }) => (
  <Field $w={w} $l={l}><FieldText>{v}</FieldText><Stepper><Tri $up /><Tri $pale={atMin} /></Stepper></Field>
);
const ComboArrow = styled.span`display: flex; align-items: center; justify-content: center; width: 32px; background: linear-gradient(#fdfdfd, #f0f0f0);`;

/* ---------- body ---------- */

const Body = styled.div`display: flex; flex: 1; min-height: 0;`;
const LeftBar = styled.aside`
  flex: none; display: flex; flex-direction: column; width: 62px; padding-top: 9px; border-right: 1px solid #b0b0b0;
  background: linear-gradient(90deg, #fbfbfb, #eeeeee);
`;
const LeftGrip = styled.i`flex: none; width: 17px; height: 4px; margin: 1px 0 5px 24px; background: radial-gradient(circle at .5px .5px, #b0b0b0 .6px, transparent .9px) 0 0 / 3px 3px;`;
const LeftTool = styled.div`flex: none; display: flex; align-items: center; gap: 7px; height: 32px; padding-left: 10px;`;

const Docks = styled.div`flex: none; display: flex; flex-direction: column; width: 435px; background: #efefef;`;
const DockTitle = styled.div<{ $pad: number; $end: number }>`
  flex: none; display: flex; height: 28px; padding: 0 ${(p) => p.$end}px 0 ${(p) => p.$pad}px; line-height: 26px;
  u { text-underline-offset: 2px; text-decoration-thickness: 1px; }
`;
const DockName = styled.span`flex: 1;`;
const DockButtons = styled.span`display: flex; gap: 4px; padding-top: 6px;`;
const DockTools = styled.div<{ $pad: number }>`flex: none; display: flex; gap: 9px; height: 29px; padding: 3px 0 0 ${(p) => p.$pad}px;`;
const SmallDrop = styled.span`width: 12px; margin: 6px -1px 0 -2px; display: flex; justify-content: center;`;

const LayerTree = styled.div`
  flex: none; display: grid; grid-template: 222px 21px / 403px 21px; width: 426px; height: 245px;
  border: 1px solid #b4b4b4; background: #fff; margin-bottom: 8px;
`;
const LayerRows = styled.div`overflow: hidden;`;
const LayerRow = styled.div<{ $sel?: boolean }>`
  display: flex; align-items: center; height: 27px; padding-left: 9px; white-space: nowrap;
  ${(p) => p.$sel && css`
    background: #0a78d7; color: #fff; text-decoration: underline; text-underline-offset: 2px;
    & > ${Tri} { background: #0a2c4c; }
  `}
`;
const Check = styled.span`
  flex: none; display: flex; align-items: center; justify-content: center; width: 21px; height: 21px; margin: 0 9px 0 12px; border: 1px solid #bdbdbd; background: #fff;
`;
const LayerName = styled.span<{ $sel?: boolean }>`
  flex: none; margin-left: 4px; padding-left: 3px; height: 27px; font-weight: 700; font-size: 17px; letter-spacing: .15px; line-height: 30px;
  ${(p) => p.$sel && css`background: #1c86dc;`}
`;
const Swatch = styled.i<{ $c?: string }>`flex: none; width: 20px; height: 20px; margin: 0 6px 1px 54px; background: ${(p) => p.$c ?? 'transparent'};`;
const LayerValue = styled.span`line-height: 30px; height: 27px; letter-spacing: .6px;`;

const VBar = styled.div`display: flex; flex-direction: column; border-left: 1px solid #b8b8b8; background: #e5e5e5;`;
const VBtn = styled.span<{ $end?: boolean }>`
  flex: none; display: flex; align-items: center; justify-content: center; height: 21px; background: #fafafa;
  ${(p) => (p.$end ? css`margin-top: auto; border-top: 1px solid #b8b8b8;` : css`border-bottom: 1px solid #b8b8b8;`)}
`;
const VThumb = styled.span<{ $h: number }>`flex: none; height: ${(p) => p.$h}px; border-bottom: 1px solid #b8b8b8; background: linear-gradient(90deg, #fff, #f3f3f3);`;
const HBar = styled.div`display: flex; border-top: 1px solid #b8b8b8; background: #e5e5e5;`;
const HBtn = styled.span<{ $end?: boolean }>`
  flex: none; display: flex; align-items: center; justify-content: center; width: 21px; background: #fafafa;
  ${(p) => (p.$end ? css`margin-left: auto; border-left: 1px solid #b8b8b8;` : css`border-right: 1px solid #b8b8b8;`)}
`;
const HThumb = styled.span`flex: none; width: 336px; border-right: 1px solid #b8b8b8; background: linear-gradient(#fff, #f0f0f0);`;
const Corner = styled.div`border-top: 1px solid #b8b8b8; border-left: 1px solid #b8b8b8; background: #efefef;`;

const Scp = styled.div`display: flex; flex: 1; padding: 7px 0 0 14px; min-height: 0;`;
const Tabs = styled.div`flex: none; display: flex; flex-direction: column; width: 30px; margin-right: 13px;`;
const Tab = styled.div<{ $h: number; $on?: boolean }>`
  flex: none; display: flex; flex-direction: column; align-items: center; justify-content: flex-end; gap: 9px; height: ${(p) => p.$h}px;
  margin: 0 ${(p) => (p.$on ? 0 : 3)}px 0 ${(p) => (p.$on ? 0 : 2)}px; padding: 0 0 1px;
  border: solid; border-width: 1px 0 1px 1px; border-color: #fff #fff #666 #fff;
`;
const TabText = styled.span`writing-mode: vertical-rl; transform: rotate(180deg); letter-spacing: -.05px; line-height: 20px;`;
const Panel = styled.div`flex: none; display: flex; flex-direction: column; width: 343px; padding-top: 13px;`;
const Version = styled.div`height: 21px; margin-bottom: 7px; padding-right: 1px; text-align: center; line-height: 21px; letter-spacing: .06px;`;
const Buttons = styled.div`display: flex; gap: 8px; padding-left: 35px; margin-bottom: 9px;`;
const Button = styled.span`display: flex; align-items: center; justify-content: center; width: 27px; height: 27px; border: 1px solid #b2b2b2; border-radius: 3px; background: #f7f7f7;`;
const NewsHead = styled.div`
  flex: none; height: 20px; margin-bottom: 10px; padding-left: 10px; border-bottom: 1px solid #fff; box-shadow: inset 0 1px #444;
  background: linear-gradient(90deg, #555, #a5a5a5); color: #fff; font: 17px/22px ${DIALOG}; letter-spacing: .7px;
`;
const NewsBox = styled.div`flex: none; display: grid; grid-template-columns: 1fr 21px; height: 269px; border: 1px solid #b4b4b4; background: #fff; margin-bottom: 10px;`;
const News = styled.div`padding-left: 3px; letter-spacing: .1px;`;
const NewsLine = styled.div<{ $h: number }>`
  display: flex; align-items: flex-end; height: ${(p) => p.$h}px; line-height: 20px; white-space: pre;
`;
const Strong = styled.b`font: 700 16px/20px ${DIALOG}; letter-spacing: .05px;`;
const Hash = styled.b`width: 27px; font: 700 24px/22px "DejaVu Sans", sans-serif; color: #008200; letter-spacing: 0; -webkit-text-stroke: .3px #008200;`;
const Link = styled.u`color: #0000e8; text-underline-offset: 2px; text-decoration-thickness: 1px; letter-spacing: -.15px; line-height: 22px;`;
const BlueButton = styled.div`
  flex: none; height: 23px; margin: 0 1px 11px; border: 1px solid #fff; border-radius: 4px; background: #337ab7; color: #fff;
  text-align: center; font: 700 13.4px/21px ${DIALOG}; letter-spacing: 0;
`;
const SplitDots = styled.i`flex: none; align-self: flex-start; width: 1px; height: 17px; margin: 78px 0 0 31px; background: repeating-linear-gradient(#aaa 0 1px, transparent 1px 3px);`;

const Canvas = styled.main`
  flex: 1; min-width: 0; margin-top: 1px; padding: 176px 0 0 228px; border: solid #b4b4b4; border-width: 1px 1px 0 1px; background: #fff;
`;

const Browser = styled.aside`flex: none; display: flex; flex-direction: column; width: 334px; background: #efefef;`;
const BrowserBody = styled.div`flex: 1; display: flex;`;
const BrowserSplit = styled.div`width: 9px; padding: 365px 0 0 5px;`;
const BrowserDots = styled.i`display: block; width: 1px; height: 17px; background: repeating-linear-gradient(#aaa 0 1px, transparent 1px 3px);`;
const BrowserTree = styled.div`flex: 1; border: 1px solid #b4b4b4; border-bottom: 0; background: #fff;`;
const BrowserRow = styled.div<{ $deep?: boolean }>`display: flex; align-items: center; height: 27px; padding-left: ${(p) => (p.$deep ? 39 : 9)}px; white-space: nowrap;`;
const Twist = styled.span`flex: none; display: flex; justify-content: center; width: 12px; margin-right: 12px;`;
const BrowserText = styled.span`margin-left: 6px; height: 27px; line-height: 29px; letter-spacing: .65px; word-spacing: 1.8px;`;

const Highlight = styled.div`position: absolute; left: 50px; top: 222px; width: 442px; height: 322px; border: 5px solid #ed1c24;`;

/* ---------- data ---------- */

const MENU: [string, number, number][] = [
  ['Project', 3, 71], ['Edit', 0, 46.5], ['View', 0, 54.5], ['Layer', 0, 57.5], ['Settings', 0, 81.5], ['Plugins', 0, 73.5], ['Vector', 4, 67],
  ['Raster', 0, 66.5], ['Database', 0, 89], ['Web', 0, 55], ['Mesh', 0, 60], ['SCP', -1, 48], ['Processing', 3, 102], ['Help', 0, 60],
];
const BROWSER: [string, string, ('r' | 'd')?, boolean?][] = [
  ['fav', 'Favorites'], ['marks', 'Spatial Bookmarks', 'r'], ['homeDir', 'Home', 'r'], ['dir', 'C:\\', 'r'], ['gpkg', 'GeoPackage'],
  ['feather', 'SpatiaLite', 'r'], ['pg', 'PostGIS'], ['mssql', 'MSSQL'], ['oracle', 'Oracle'], ['db2', 'DB2'], ['wms', 'WMS/WMTS'],
  ['vtiles', 'Vector Tiles'], ['grid', 'XYZ Tiles', 'd'], ['grid', 'Essen Shp', undefined, true], ['grid', 'Google Maps', undefined, true],
  ['grid', 'OpenStreetMap', undefined, true], ['wcs', 'WCS'], ['wfs', 'WFS / OGC API - Features'], ['ows', 'OWS'],
  ['arcMap', 'ArcGIS Map Service'], ['arcFeat', 'ArcGIS Feature Service'], ['geonode', 'GeoNode'],
];
const LEFT: [string, boolean?][] = [
  ['addVec'], ['addRas'], ['addMesh'], ['addCsv'], ['addSpl'], ['addVirt'], ['addPg', true], ['addWms', true], ['addWcs'], ['addWfs', true], ['newFeather', true],
];
const LAYERS: [string, string, string?][] = [
  ['clip area_T32ULC_20200626T104031_B', '1', '21502'], ['clip area_T32ULC_20200626T104031_B', '468', '19357'], ['clip area_T32ULC_20200626T104031_B', '403'],
];

const tools = (names: string, on?: string) => names.split(' ').map((n) => <Tool key={n} $on={n === on}><Icon n={n} /></Tool>);

const Mnemonic = ({ text, at }: { text: string; at: number }) =>
  at < 0 ? <>{text}</> : <>{text.slice(0, at)}<u>{text[at]}</u>{text.slice(at + 1)}</>;

const FloatClose = () => (
  <DockButtons>
    <svg width="11" height="11" viewBox="0 0 11 11" fill="none" stroke="#6a6a6a"><rect x=".5" y=".5" width="10" height="10" rx="2" /><path d="M4.500 4.500v-2h4v4h-2M2.500 4.500h4v4h-4z" /></svg>
    <svg width="11" height="11" viewBox="0 0 11 11" fill="none" stroke="#6a6a6a"><rect x=".5" y=".5" width="10" height="10" rx="2" /><path d="M3 3l5 5M8 3l-5 5" stroke="#555" strokeWidth="1.900" /></svg>
  </DockButtons>
);

/* bright pixels of the raster: x, y, opacity */
const SPECKS: [number, number, number][] = [
  [244, 19, 1], [157, 67, 1], [304, 97, 1], [479, 108, 1], [436, 304, 1], [437, 304, .7], [328, 108, .5], [323, 149, .5], [494, 125, .5], [554, 80, .5], [601, 29, .5],
  [624, 119, .6], [303, 241, .5], [288, 278, .5], [209, 299, .4], [269, 2, .4], [270, 3, .3], [127, 12, .4], [288, 53, .4], [123, 27, .4], [231, 224, .3], [331, 37, .3],
];

/* open-pit and urban patches slightly brighter than the ground: x, y, width, height */
const PATCHES: [number, number, number, number][] = [
  [433, 183, 20, 12], [329, 34, 6, 5], [162, 65, 8, 5], [498, 86, 5, 8], [521, 86, 5, 7], [228, 222, 7, 4], [396, 203, 14, 4], [500, 143, 10, 4],
  [8, 30, 5, 7], [616, 292, 5, 6], [403, 255, 4, 10], [152, 192, 10, 3], [355, 171, 10, 4], [237, 317, 6, 4], [455, 292, 6, 8], [331, 224, 4, 8],
];

const Raster = () => (
  <svg width="634" height="339" viewBox="0 0 634 339">
    <defs>
      <filter id="fine" x="0" y="0" width="100%" height="100%" colorInterpolationFilters="sRGB">
        <feTurbulence type="fractalNoise" baseFrequency=".4" numOctaves="4" seed="7" />
        <feColorMatrix values=".24 0 0 0 -.085  .24 0 0 0 -.085  .24 0 0 0 -.085  0 0 0 0 1" />
      </filter>
      <filter id="ragged" x="-5%" y="-5%" width="110%" height="110%" colorInterpolationFilters="sRGB">
        <feTurbulence type="fractalNoise" baseFrequency=".09" numOctaves="3" seed="4" />
        <feDisplacementMap in="SourceGraphic" scale="22" xChannelSelector="R" yChannelSelector="G" />
        <feGaussianBlur stdDeviation="2" />
      </filter>
    </defs>
    <rect width="634" height="339" fill="#060606" />
    <rect width="634" height="339" filter="url(#fine)" />
    <g fill="#020202" filter="url(#ragged)" opacity=".7">
      <ellipse cx="50" cy="180" rx="11" ry="15" /><ellipse cx="48" cy="213" rx="10" ry="6" />
      <ellipse cx="505" cy="180" rx="38" ry="20" /><ellipse cx="528" cy="202" rx="16" ry="9" />
      <ellipse cx="287" cy="152" rx="23" ry="12" /><ellipse cx="349" cy="154" rx="19" ry="16" />
      <ellipse cx="452" cy="114" rx="32" ry="18" /><ellipse cx="537" cy="122" rx="34" ry="18" />
      <ellipse cx="121" cy="294" rx="13" ry="15" /><ellipse cx="304" cy="262" rx="20" ry="26" /><ellipse cx="150" cy="160" rx="18" ry="14" />
    </g>
    <path d="M1 54Q20 62 32 77T42 110Q62 118 83 114T80 142Q84 156 108 164T115 192Q140 200 160 195T182 214Q172 226 176 250T182 282Q200 280 215 274T220 310Q236 324 242 338" fill="none" stroke="#020202" strokeWidth="2" opacity=".7" />
    <g fill="#fff" opacity=".035">{PATCHES.map(([x, y, w, h], i) => <rect key={i} x={x} y={y} width={w} height={h} />)}</g>
    <g fill="#fff">{SPECKS.map(([x, y, o], i) => <rect key={i} x={x} y={y} width="1" height="1" opacity={o} />)}</g>
  </svg>
);

export default function App() {
  return (
    <Frame>
      <Global />
      <TitleBar>
        <Icon n="logo" />
        <Title>*Untitled Project — QGIS</Title>
        <WinButtons>
          <svg width="15" height="15" stroke="#000" fill="none"><path d="M0 6.500h15" /></svg>
          <svg width="15" height="15" stroke="#000" fill="none"><path d="M.5 3.500h11v11H.5zM3.500 3.500v-3h11v11h-3" /></svg>
          <svg width="16" height="15" stroke="#000" fill="none"><path d="M.5 0l15 15M15.500 0l-15 15" /></svg>
        </WinButtons>
      </TitleBar>
      <MenuBar>
        {MENU.map(([t, at, w]) => <MenuItem key={t} $w={w}><Mnemonic text={t} at={at} /></MenuItem>)}
      </MenuBar>

      <ToolRow>
        <Grip $l={9} $r={6} />
        {tools('fresh open save layout manager style')}
        <Grip $l={14} $r={6} />
        {tools('pan panSel zoomIn zoomOut zoomFull zoomSel zoomLayer zoomNative zoomLast zoomNext newView newMark marks clock refresh', 'pan')}
        <Grip $l={14} $r={6} />
        {tools('identify table abacus gear sigma measure')}
        <Drop $w={18}><Tri /></Drop>
        {tools('tip action')}
        <Drop $w={17}><Tri $pale /></Drop>
        <Boxed $w={32}><Icon n="textNote" /></Boxed>
        <Boxed $w={18}><Tri /></Boxed>
      </ToolRow>

      <ToolRow>
        <Grip $l={9} $r={6} />
        {tools('addLayer newGpkg newShp newSpl newMem')}
        <Divider $l={4} $r={5} />
        {tools('newVirt')}
        <Divider $l={4} $r={5} />
        <Grip $l={14} $r={6} />
        {tools('pencils pencil saveEdit addPoint vertex')}
        <Drop $w={18}><Tri $pale /></Drop>
        {tools('modify remove cut copy paste undo redo')}
        <Grip $l={14} $r={5} />
        {tools('tagOff diagram')}
        <Divider $l={5} $r={5} />
        {tools('tagPin tagRed')}
        <Divider $l={4} $r={5} />
        {tools('tagPinOff tagEye tagMove tagTurn tagEdit')}
        <Grip $l={14} $r={6} />
        {tools('webDown webFind webBino', 'webFind')}
        <Grip $l={14} $r={6} />
        {tools('book')}
        <Grip $l={14} $r={0} />
      </ToolRow>

      <ToolRow>
        <Grip $l={9} $r={6} />
        {tools('h1 h2 h3 h4 sunUp sunDown conUp conDown')}
      </ToolRow>

      <ToolRow $h={42}>
        <Grip $l={9} $r={10} />
        <Bare><Icon n="select" /></Bare>
        <Drop $w={26}><Tri $pale /></Drop>
        <Bare $l={1}><Icon n="form" /></Bare>
        <Drop $w={26}><Tri $pale /></Drop>
        <Bare $l={1}><Icon n="deselect" /></Bare>
        <Drop $w={26}><Tri /></Drop>
        <Grip $l={11} $r={10} />
        <Bare><Icon n="roiClip" /></Bare>
        <Bare $l={9}><Icon n="lensLayers" /></Bare>
        <Gradient $w={87} $l={5}>RGB  =</Gradient>
        <Field $w={80} $l={1}><FieldText>1-2-3</FieldText><ComboArrow><Tri /></ComboArrow></Field>
        <Bare $l={5}><Icon n="percent" /></Bare>
        <Bare $l={9}><Icon n="sigmaStat" /></Bare>
        <Bare $l={9}><Icon n="lensPlus" /></Bare>
        <Gradient $w={88} $l={5}>ROI</Gradient>
        <Bare $l={5}><Icon n="poly" /></Bare>
        <Bare $l={9}><Icon n="plusBox" /></Bare>
        <Bare $l={9}><Icon n="redoBox" /></Bare>
        <Tagged $w={37} $l={5}>Dist</Tagged>
        <Spin w={100} l={1} v="0,010000" />
        <Tagged $w={34} $l={1}>Min</Tagged>
        <Spin w={60} l={1} v="60" />
        <Tagged $w={39} $l={1}>Max</Tagged>
        <Spin w={60} l={1} v="100" />
        <Bare $l={5}><Icon n="lensColor" /></Bare>
        <Gradient $w={95} $l={5}>Preview</Gradient>
        <Bare $l={5}><Icon n="mosaic" /></Bare>
        <Bare $l={9}><Icon n="redoBox" /></Bare>
        <Tagged $w={16} $l={5}>T</Tagged>
        <Spin w={50} l={1} v="0" atMin />
        <Tagged $w={15} $l={1}>S</Tagged>
        <Spin w={60} l={1} v="200" />
        <Bare $l={6}><Icon n="trash" /></Bare>
        <Bare $l={8}><Icon n="kml" /></Bare>
        <Grip $l={19} $r={10} />
        <Bare><Icon n="matrix" /></Bare>
        <Spin w={60} l={5} v="0" />
        <Bare $l={5}><Icon n="window" /></Bare>
        <Spin w={60} l={5} v="1" />
        <Bare $l={5}><Icon n="window" /></Bare>
        <Spin w={60} l={5} v="2" />
        <Bare $l={5}><Icon n="window" /></Bare>
        <Bare $l={9}><Icon n="undoGrid" /></Bare>
      </ToolRow>

      <Body>
        <LeftBar>
          <LeftGrip />
          {LEFT.map(([n, drop]) => <LeftTool key={n}><Icon n={n} />{drop && <Tri />}</LeftTool>)}
        </LeftBar>

        <Docks>
          <DockTitle $pad={4} $end={11}><DockName>Layers</DockName><FloatClose /></DockTitle>
          <DockTools $pad={10}>
            {['brush', 'addGroup', 'eye', 'funnel', 'expr'].map((n) => <Icon key={n} n={n} s={16} />)}
            <SmallDrop><Tri $pale $s={5} /></SmallDrop>
            {['expand', 'collapse', 'removeLayer'].map((n) => <Icon key={n} n={n} s={16} />)}
          </DockTools>
          <LayerTree>
            <LayerRows>
              {LAYERS.map(([name, low, high], i) => (
                <React.Fragment key={low}>
                  <LayerRow $sel={i === 0}>
                    <Tri />
                    <Check><svg width="17" height="17" fill="none" stroke="#000" strokeWidth="2.400"><path d="M2.500 9l4 5.500L14 1.500" /></svg></Check>
                    <svg width="20" height="20"><Checker pale={i ? '#b9cfea' : '#67a9e6'} mid={i ? '#d3e0f0' : '#4d93d6'} dark={i ? '#2c3e54' : '#164a80'} /></svg>
                    <LayerName $sel={i === 0}>{name}</LayerName>
                  </LayerRow>
                  <LayerRow><Swatch $c="#000" /><LayerValue>{low}</LayerValue></LayerRow>
                  {high && <LayerRow><Swatch /><LayerValue>{high}</LayerValue></LayerRow>}
                </React.Fragment>
              ))}
            </LayerRows>
            <VBar><VBtn><Tri $up $s={5} /></VBtn><VThumb $h={40} /><VBtn $end><Tri $s={5} /></VBtn></VBar>
            <HBar><HBtn><SideTri $left /></HBtn><HThumb /><HBtn $end><SideTri /></HBtn></HBar>
            <Corner />
          </LayerTree>

          <DockTitle $pad={4} $end={11}><DockName>SCP <u>D</u>ock</DockName><FloatClose /></DockTitle>
          <Scp>
            <Tabs>
              <Tab $h={77} $on><TabText>Home</TabText><Icon n="homeClip" s={15} /></Tab>
              <Tab $h={134}><TabText>Training input</TabText><Icon n="input" s={15} /></Tab>
              <Tab $h={126}><TabText>Classification</TabText><Icon n="classes" s={15} /></Tab>
              <Tab $h={32}><Icon n="layers" s={23} /></Tab>
              <Tab $h={32}><Icon n="bands" s={22} /></Tab>
              <Tab $h={32}><Icon n="down" s={22} /></Tab>
              <Tab $h={32}><Icon n="twinIn" s={23} /></Tab>
            </Tabs>
            <Panel>
              <Version>SCP Version 6.4.6 - Greenbelt</Version>
              <Buttons>
                {['layers', 'bands', 'down', 'twinIn', 'twinMid', 'twinOut', 'calc', 'batch'].map((n) => <Button key={n}><Icon n={n} s={22} /></Button>)}
              </Buttons>
              <NewsHead>News</NewsHead>
              <NewsBox>
                <News>
                  <NewsLine $h={25}><Strong>Plugin</Strong></NewsLine>
                  <NewsLine $h={27}><Hash>#</Hash><Strong>New release: Semi-Automatic OS</Strong></NewsLine>
                  <NewsLine $h={21}><Strong>v. 6</Strong><Link> Read more</Link></NewsLine>
                  <NewsLine $h={27}><Hash>#</Hash><Strong>Tutorial: Cloud Masking, Image</Strong></NewsLine>
                  <NewsLine $h={21}><Strong>Mosaic, and Land Cover Change</Strong></NewsLine>
                  <NewsLine $h={19}><Strong>Location</Strong><Link> Read more</Link></NewsLine>
                  <NewsLine $h={38}><Strong>Services</Strong></NewsLine>
                  <NewsLine $h={26}><Hash>#</Hash>Landsat download: OK</NewsLine>
                  <NewsLine $h={29}><Hash>#</Hash>ASTER, and MODIS download: OK</NewsLine>
                  <NewsLine $h={29}><Hash>#</Hash>Sentinel-2 download: OK</NewsLine>
                </News>
                <VBar><VBtn><Tri $up $s={5} /></VBtn><VThumb $h={138} /><VBtn $end><Tri $s={5} /></VBtn></VBar>
              </NewsBox>
              <BlueButton>User manual</BlueButton>
              <BlueButton>Ask a question</BlueButton>
            </Panel>
            <SplitDots />
          </Scp>
        </Docks>

        <Canvas><Raster /></Canvas>

        <Browser>
          <DockTitle $pad={13} $end={2}><DockName>Browser</DockName><FloatClose /></DockTitle>
          <DockTools $pad={19}>
            {['addSel', 'refresh', 'funnel', 'collapse', 'info'].map((n) => <Icon key={n} n={n} s={16} />)}
          </DockTools>
          <BrowserBody>
            <BrowserSplit><BrowserDots /></BrowserSplit>
            <BrowserTree>
              {BROWSER.map(([icon, label, twist, deep]) => (
                <BrowserRow key={label} $deep={deep}>
                  <Twist>{twist === 'r' ? <SideTri /> : twist === 'd' ? <Tri /> : null}</Twist>
                  <Icon n={icon} />
                  <BrowserText>{label}</BrowserText>
                </BrowserRow>
              ))}
            </BrowserTree>
          </BrowserBody>
        </Browser>
      </Body>
      <Highlight />
    </Frame>
  );
}
